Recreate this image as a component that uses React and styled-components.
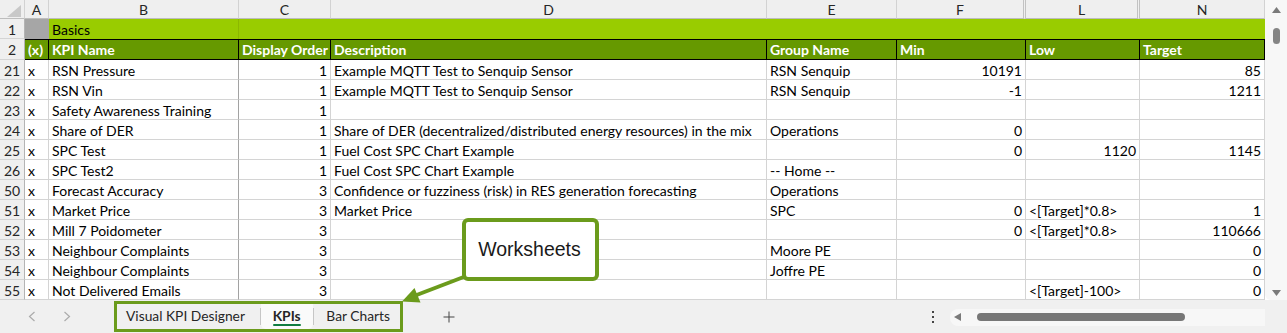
import React from 'react';
import styled, { createGlobalStyle } from 'styled-components';

const GREEN_LIGHT = '#99cc00';
const GREEN_DARK = '#669900';
const GRID = '#d4d4d4';
const CALLOUT = '#6b9b1c';

const GlobalStyle = createGlobalStyle`
  html, body { margin: 0; padding: 0; background: #fff; }
  body { font-family: Lato, "Noto Sans", sans-serif; }
  * { box-sizing: border-box; }
`;

const Frame = styled.div`
  position: relative;
  width: 1287px;
  height: 333px;
  overflow: hidden;
  display: flex;
  flex-direction: column;
  background: #fff;
`;

const Main = styled.div`
  display: flex;
  height: 300px;
`;

const Sheet = styled.div`
  display: grid;
  grid-template-columns: 25px 24px 190px 92px 436px 130px 129px 114px 125px;
  grid-template-rows: 19px 20px 21px repeat(12, 20px);
  width: 1265px;
  font-family: Lato, "Noto Sans", sans-serif;
  font-size: 14px;
  color: #000;
`;

const ColHead = styled.div`
  background: #efefef;
  border-right: ${p => (p.$double ? '3px double #c2c2c2' : '1px solid #d2d2d2')};
  border-bottom: 1px solid #bdbdbd;
  display: flex;
  justify-content: ${p => (p.$corner ? 'flex-end' : 'center')};
  padding: ${p => (p.$corner ? '0 3px 1px 0' : '1px 0 0 0')};
  align-items: ${p => (p.$corner ? 'flex-end' : 'center')};
  color: #262626;
  font-size: 14px;
  line-height: 18px;
`;

const RowHead = styled.div`
  background: #efefef;
  border-right: 1px solid #b4b4b4;
  border-bottom: 1px solid #d4d4d4;
  display: flex;
  align-items: ${p => (p.$mid ? 'center' : 'flex-end')};
  justify-content: center;
  line-height: 17px;
  color: #262626;
  font-size: 14px;
`;

const Cell = styled.div`
  border-right: 1px solid ${p => (p.$frozen ? '#a2a2a2' : GRID)};
  border-bottom: 1px solid ${GRID};
  padding: 0 3px;
  display: flex;
  align-items: flex-end;
  justify-content: ${p => (p.$num ? 'flex-end' : 'flex-start')};
  line-height: 17px;
  white-space: nowrap;
  overflow: hidden;
  min-width: 0;
`;

const BlankCorner = styled.div`
  background: #a6a6a6;
`;

const TitleCell = styled.div`
  background: ${GREEN_LIGHT};
  border-right: 1px solid ${p => (p.$frozen ? '#8cb800' : GREEN_LIGHT)};
  padding: 0 3px;
  display: flex;
  align-items: flex-end;
  line-height: 18px;
  white-space: nowrap;
`;

const HeadCell = styled.div`
  background: ${GREEN_DARK};
  color: #fff;
  font-weight: 700;
  border-top: 1px solid #000;
  border-bottom: 1px solid #000;
  border-right: 1px solid #000;
  padding: 1px 3px 0 3px;
  display: flex;
  align-items: center;
  line-height: 18px;
  white-space: nowrap;
  overflow: hidden;
`;

const VScroll = styled.div`
  width: 22px;
  height: 300px;
  background: #f7f7f7;
  border-bottom-left-radius: 6px;
  display: flex;
  flex-direction: column;
  align-items: center;
  padding: 7px 0 4px 1px;
`;

const VThumb = styled.div`
  width: 7px;
  height: 16px;
  margin-top: 15px;
  border-radius: 4px;
  background: #858585;
`;

const Spacer = styled.div`
  flex: 1;
`;

const TabBar = styled.div`
  height: 33px;
  background: #f0f0f0;
  display: flex;
  align-items: center;
  font-family: Lato, "Noto Sans", sans-serif;
`;

const Nav = styled.div`
  width: 114px;
  height: 100%;
  display: flex;
  align-items: center;
  padding-left: 28px;
  gap: 27px;
`;

const TabGroup = styled.div`
  align-self: flex-start;
  margin-top: 1px;
  width: 289px;
  height: 31px;
  border: 3px solid ${CALLOUT};
  display: flex;
  align-items: stretch;
`;

const Tab = styled.div`
  display: flex;
  align-items: center;
  padding: 0 ${p => p.$pr}px 0 ${p => p.$pl}px;
  background: ${p => (p.$active ? '#fafafa' : 'transparent')};
  border-radius: 0 0 5px 5px;
  color: #262626;
  font-size: 13.8px;
  font-weight: ${p => (p.$active ? 700 : 400)};
  white-space: nowrap;
`;

const TabLabel = styled.div`
  display: flex;
  flex-direction: column;
  align-items: stretch;
  padding-top: 2px;
  line-height: 14px;
`;

const Underline = styled.div`
  height: 2px;
  margin-top: 1px;
  border-radius: 1px;
  background: ${p => (p.$on ? '#107c41' : 'transparent')};
`;

const TabSep = styled.div`
  width: 1px;
  align-self: center;
  height: 17px;
  background: #c6c6c6;
`;

const PlusBox = styled.div`
  margin-left: 40px;
  display: flex;
`;

const Kebab = styled.div`
  margin-left: auto;
  margin-right: 15px;
  display: flex;
`;

const HTrack = styled.div`
  width: 315px;
  height: 17px;
  margin-right: 22px;
  margin-top: 1px;
  background: #f7f7f7;
  border-radius: 8px 0 0 8px;
  display: flex;
  align-items: center;
  padding-left: 4px;
`;

const HThumb = styled.div`
  width: 208px;
  height: 8px;
  margin-left: 16px;
  border-radius: 4px;
  background: #777;
`;

const CalloutBox = styled.div`
  position: absolute;
  left: 462px;
  top: 218px;
  width: 137px;
  height: 63px;
  border: 4px solid ${CALLOUT};
  border-radius: 6px;
  background: #fff;
  display: flex;
  align-items: center;
  justify-content: center;
  padding-right: 2px;
  font-family: "Liberation Sans", Arial, sans-serif;
  font-size: 19.5px;
  color: #1a1a1a;
`;

const Overlay = styled.svg`
  position: absolute;
  left: 0;
  top: 0;
  pointer-events: none;
`;

const columns = ['A', 'B', 'C', 'D', 'E', 'F', 'L', 'N'];

const rows = [
  [21, 'RSN Pressure', '1', 'Example MQTT Test to Senquip Sensor', 'RSN Senquip', '10191', '', '85'],
  [22, 'RSN Vin', '1', 'Example MQTT Test to Senquip Sensor', 'RSN Senquip', '-1', '', '1211'],
  [23, 'Safety Awareness Training', '1', '', '', '', '', ''],
  [24, 'Share of DER', '1', 'Share of DER (decentralized/distributed energy resources) in the mix', 'Operations', '0', '', ''],
  [25, 'SPC Test', '1', 'Fuel Cost SPC Chart Example', '', '0', '1120', '1145'],
  [26, 'SPC Test2', '1', 'Fuel Cost SPC Chart Example', '-- Home --', '', '', ''],
  [50, 'Forecast Accuracy', '3', 'Confidence or fuzziness (risk) in RES generation forecasting', 'Operations', '', '', ''],
  [51, 'Market Price', '3', 'Market Price', 'SPC', '0', '<[Target]*0.8>', '1'],
  [52, 'Mill 7 Poidometer', '3', '', '', '0', '<[Target]*0.8>', '110666'],
  [53, 'Neighbour Complaints', '3', '', 'Moore PE', '', '', '0'],
  [54, 'Neighbour Complaints', '3', '', 'Joffre PE', '', '', '0'],
  [55, 'Not Delivered Emails', '3', '', '', '', '<[Target]-100>', '0'],
];

const headers = ['(x)', 'KPI Name', 'Display Order', 'Description', 'Group Name', 'Min', 'Low', 'Target'];

const isNum = v => /^-?\d+(\.\d+)?$/.test(v);

const Tri = ({ dir }) => (
  <svg width="9" height="6" viewBox="0 0 9 6">
    {dir === 'up' ? (
      <polygon points="4.5,0 9,6 0,6" fill="#7a7a7a" />
    ) : (
      <polygon points="0,0 9,0 4.5,6" fill="#7a7a7a" />
    )}
  </svg>
);

const Chevron = ({ left }) => (
  <svg width="8" height="11" viewBox="0 0 8 11">
    <polyline
      points={left ? '6.5,1 1.5,5.5 6.5,10' : '1.5,1 6.5,5.5 1.5,10'}
      fill="none"
      stroke="#ababab"
      strokeWidth="1.2"
    />
  </svg>
);

export default function App() {
  return (
    <>
      <GlobalStyle />
      <Frame>
        <Main>
          <Sheet>
            <ColHead $corner>
              <svg width="14" height="12" viewBox="0 0 14 12">
                <polygon points="14,0 14,12 0,12" fill="#c8c8c8" />
              </svg>
            </ColHead>
            {columns.map(c => (
              <ColHead key={c} $double={c === 'F' || c === 'L'}>
                {c}
              </ColHead>
            ))}

            <RowHead>1</RowHead>
            <BlankCorner />
            <TitleCell $frozen>Basics</TitleCell>
            {columns.slice(2).map(c => (
              <TitleCell key={c} />
            ))}

            <RowHead $mid>2</RowHead>
            {headers.map(h => (
              <HeadCell key={h}>{h}</HeadCell>
            ))}

            {rows.map(r => (
              <React.Fragment key={r[0]}>
                <RowHead>{r[0]}</RowHead>
                <Cell>x</Cell>
                {r.slice(1).map((v, i) => (
                  <Cell key={i} $frozen={i === 0} $num={isNum(v)}>
                    {v}
                  </Cell>
                ))}
              </React.Fragment>
            ))}
          </Sheet>
          <VScroll>
            <Tri dir="up" />
            <VThumb />
            <Spacer />
            <Tri dir="down" />
          </VScroll>
        </Main>

        <TabBar>
          <Nav>
            <Chevron left />
            <Chevron />
          </Nav>
          <TabGroup>
            <Tab $pl={9} $pr={15}>
              <TabLabel>
                Visual KPI Designer
                <Underline />
              </TabLabel>
            </Tab>
            <TabSep />
            <Tab $active $pl={12} $pr={12}>
              <TabLabel>
                KPIs
                <Underline $on />
              </TabLabel>
            </Tab>
            <TabSep />
            <Tab $pl={13} $pr={10}>
              <TabLabel>
                Bar Charts
                <Underline />
              </TabLabel>
            </Tab>
          </TabGroup>
          <PlusBox>
            <svg width="12" height="12" viewBox="0 0 12 12">
              <path d="M6 0.5V11.5M0.5 6H11.5" stroke="#444" strokeWidth="1" fill="none" />
            </svg>
          </PlusBox>
          <Kebab>
            <svg width="4" height="12" viewBox="0 0 4 12">
              <rect x="1" y="0" width="2" height="2" fill="#444" />
              <rect x="1" y="5" width="2" height="2" fill="#444" />
              <rect x="1" y="10" width="2" height="2" fill="#444" />
            </svg>
          </Kebab>
          <HTrack>
            <svg width="7" height="8" viewBox="0 0 7 8">
              <polygon points="7,0 7,8 0,4" fill="#7a7a7a" />
            </svg>
            <HThumb />
          </HTrack>
        </TabBar>

        <CalloutBox>Worksheets</CalloutBox>
        <Overlay width="1287" height="333" viewBox="0 0 1287 333">
          <line x1="465" y1="276.5" x2="414" y2="296" stroke={CALLOUT} strokeWidth="4" />
          <polygon points="402,301.5 414.5,288 420.5,302.5" fill={CALLOUT} />
        </Overlay>
      </Frame>
    </>
  );
}
